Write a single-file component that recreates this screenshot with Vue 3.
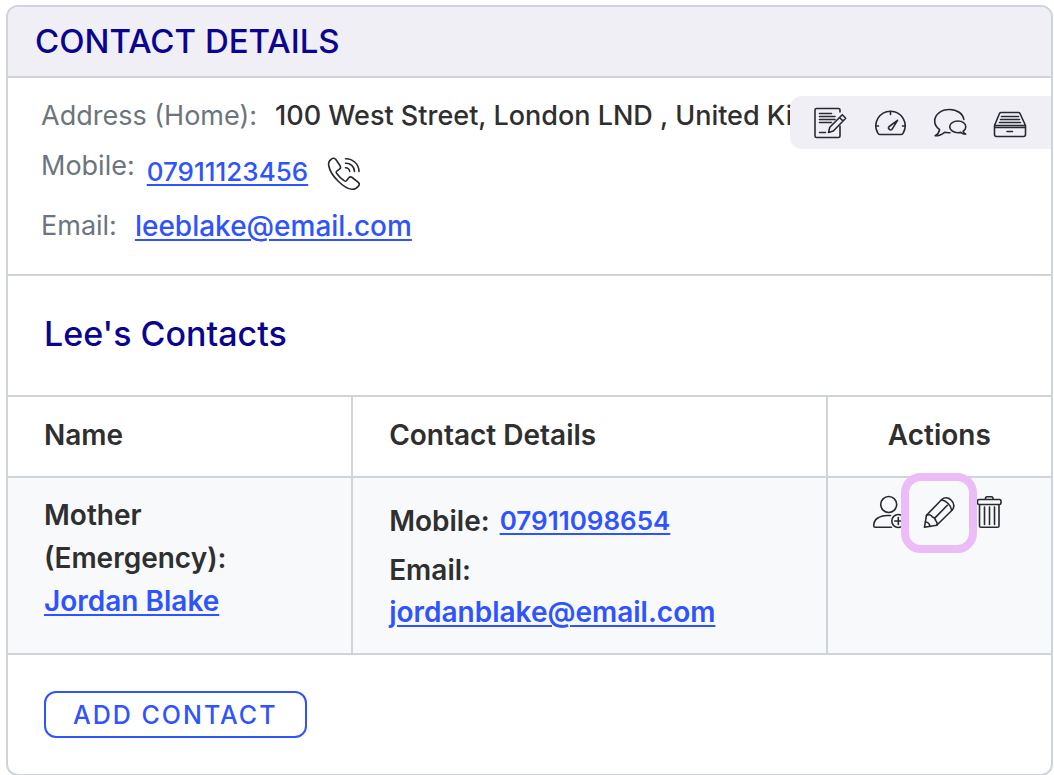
<script setup>
const contact = {
  relation: 'Mother (Emergency):',
  name: 'Jordan Blake',
  mobile: '07911098654',
  email: 'jordanblake@email.com',
}
</script>

<template>
  <main class="card">
    <header class="card-head">
      <h1>CONTACT DETAILS</h1>
    </header>

    <section class="info">
      <div class="row address">
        <span class="label">Address (Home):</span>
        <span class="value">100 West Street, London LND , United Kingdom</span>
      </div>
      <div class="row mobile">
        <span class="label">Mobile:</span>
        <a class="drop number" href="#">07911123456</a>
        <button class="icon-btn call" aria-label="Call mobile">
          <svg viewBox="0 0 32 32">
            <path d="M7.700 1.300C6.400 0 4.300 .300 3 1.500 1 3 .300 5 .700 7.500 1.500 12 5 18 10 23 15 28 20 31 24 31.300 26.500 31.400 29 30 30.600 28 31.500 26.800 31.400 25.300 30.300 24.300L24.200 19.500C23 18.700 21.500 18.800 20.600 19.900L18.500 22.700C18 23.300 17.200 23.300 16.500 22.900 13 20.600 10.500 18.200 8.400 15 8 14.300 8.200 13.600 8.800 13.200L11.500 11.200C12.700 10.300 12.800 9 12.100 7.800Z" />
            <path d="M17.500 .700A13 13 0 0 1 31 13.500M17.500 5.200A8.500 8.500 0 0 1 26.500 13.500M17.500 9.700A4 4 0 0 1 21.700 13.500" />
          </svg>
        </button>
      </div>
      <div class="row">
        <span class="label">Email:</span>
        <a class="email" href="#">leeblake@email.com</a>
      </div>

      <nav class="toolbar" aria-label="Client tools">
        <button class="icon-btn" aria-label="Notes">
          <svg viewBox="0 0 32 32">
            <path d="M26 5V3Q26 1.500 24.500 1.500H2.500Q1 1.500 1 3V29Q1 30.500 2.500 30.500H24.500Q26 30.500 26 29V19" />
            <path d="M5.500 6.500H17.500M5.500 9.500H21M5.500 12.500H21M5.500 15.500H17.500M5.500 25.500H11.500" />
            <path d="M14.500 25.500L15.800 20.300 28.300 7.700 31.700 11.200 19.300 24Z M25.500 10.500L29 14" />
          </svg>
        </button>
        <button class="icon-btn" aria-label="Dashboard">
          <svg viewBox="0 0 32 32">
            <path d="M5.500 27.500Q4.500 27.500 3.800 26A14.600 14.600 0 1 1 29.200 26Q28.500 27.500 27.500 27.500Z" />
            <path d="M16.500 4.500V7.500M2 19H4.500M28.500 19H31M23.500 13.300L15.200 19.500A1.900 1.900 0 1 0 18 22.300Z" />
          </svg>
        </button>
        <button class="icon-btn" aria-label="Messages">
          <svg viewBox="0 0 32 32">
            <path d="M29.800 12.500C29 6.500 23 2.500 15.500 2.500 7 2.500 .700 7.500 .700 14 .700 17.600 2.500 20.500 5.600 22.700 5.200 25.300 3.600 27.300 1.200 28.800 5 28.700 8.200 27.300 10.500 25.300 12.200 25.700 14 25.800 16 25.700" />
            <path d="M29.200 24.200C31 23 31.800 21.300 31.800 19.700 31.800 16.300 28.300 14 24 14S15.700 16.400 15.700 19.800 19.500 25.700 24 25.700C25 25.700 25.800 25.600 26.700 25.400 28.200 26.700 30 27.200 31.700 27.200 30.400 26.500 29.500 25.500 29.200 24.200Z" />
          </svg>
        </button>
        <button class="icon-btn" aria-label="Documents">
          <svg viewBox="0 0 32 32">
            <path d="M.500 18.500L5.500 6.500Q6 5.500 7 5.500H24.500Q25.500 5.500 26 6.500L31.500 18.500V27.500Q31.500 29.500 29.500 29.500H2.500Q.500 29.500 .500 27.500ZM.500 18.500H31.500M.500 20.500H31.500" />
            <path d="M7.500 9.500H24.500M6.500 12.500H25.500M5.500 15.500H26.500M13 24.500H18.500" />
          </svg>
        </button>
      </nav>
    </section>

    <section class="contacts">
      <h2>Lee's Contacts</h2>
      <table>
        <thead>
          <tr>
            <th class="col-name">Name</th>
            <th class="col-details">Contact Details</th>
            <th class="col-actions">Actions</th>
          </tr>
        </thead>
        <tbody>
          <tr>
            <td>
              <div class="person">
                {{ contact.relation }}
                <a href="#">{{ contact.name }}</a>
              </div>
            </td>
            <td class="details">
              <div class="phone-line">
                <span>Mobile:</span>
                <a class="number" href="#">{{ contact.mobile }}</a>
              </div>
              <div>Email:</div>
              <a href="#">{{ contact.email }}</a>
            </td>
            <td class="actions-cell">
              <div class="actions">
                <button class="icon-btn" aria-label="Add person">
                  <svg viewBox="0 0 32 32">
                    <circle cx="15.700" cy="8.500" r="8" />
                    <path d="M18.500 31.200H2.200Q.700 31.200 .700 29.500C.700 23.500 6 19.500 14.500 19.500H17.500" />
                    <circle cx="25.300" cy="25" r="6.500" />
                    <path d="M25.300 21.500V28.500M21.800 25H28.800" />
                  </svg>
                </button>
                <button class="icon-btn highlighted" aria-label="Edit contact">
                  <svg viewBox="0 0 32 32">
                    <path d="M1.500 31.200L3.500 19.200 19 3.300C21.500 .900 25.500 1.200 28.300 4.200 31.500 7.300 31.600 11.500 29 14.200L13.700 29.300Z" />
                    <path d="M3.500 19.200C5.500 18.200 8.800 19.200 9.300 21 11.500 21.500 12.500 22.800 12.600 24.500 14 25.800 14.500 27.500 13.700 29.300M11.500 22.400L24.300 9.300M2.500 26C4.800 26.200 6.600 28 7 30.400M18.500 4C23 4.300 28.300 9.500 28.600 14.300" />
                  </svg>
                </button>
                <button class="icon-btn" aria-label="Delete contact">
                  <svg viewBox="0 0 32 32">
                    <path d="M12.500 3.500V2.500Q12.500 .700 14 .700H18.500Q20 .700 20 2.500V3.500M6 3.500H26.500Q28 3.500 28 5V6.500Q28 8.500 26.500 8.500H6Q4.500 8.500 4.500 6.500V5Q4.500 3.500 6 3.500ZM6.500 8.500V30Q6.500 31.300 8 31.300H24.500Q26 31.300 26 30V8.500M11.500 11V28.500M16.500 11V28.500M21.500 11V28.500" />
                  </svg>
                </button>
              </div>
            </td>
          </tr>
        </tbody>
      </table>
      <footer>
        <button class="add">ADD CONTACT</button>
      </footer>
    </section>
  </main>
</template>

<style>
body {
  background: #fff;
}
</style>

<style scoped>
.card {
  margin: 5px 1px 0 6px;
  border: 2px solid #ced4da;
  border-radius: 12px;
  overflow: hidden;
  font-family: Inter, "Liberation Sans", sans-serif;
  font-size: 27px;
  line-height: 42px;
  color: #2f2f2f;
}
.card-head {
  padding: 13px 27px 14px;
  background: #f0eff5;
  border-bottom: 2px solid #ced4da;
}
h1,
h2 {
  margin: 0;
  font-weight: 500;
  color: #0a0590;
}
h1 {
  font-size: 33px;
}
h2 {
  padding: 37px 36px 40px;
  font-size: 34px;
}
a {
  color: #2f54ff;
  font-weight: 500;
  text-decoration-thickness: 2px;
  text-underline-offset: 3px;
}
.info {
  position: relative;
  padding: 17px 33px 27px;
  border-bottom: 2px solid #ced4da;
}
.row {
  display: flex;
  align-items: flex-start;
  gap: 18px;
  white-space: nowrap;
}
.label {
  color: #6c757d;
}
.value {
  font-weight: 500;
}
.mobile {
  gap: 12px;
  padding: 8px 0 12px;
}
.drop {
  margin-top: 6px;
}
.number {
  font-size: 26px;
}
.email {
  font-size: 28px;
}
.icon-btn {
  display: flex;
  flex: none;
  align-items: center;
  justify-content: center;
  padding: 0;
  border: 0;
  background: none;
  cursor: pointer;
}
.icon-btn svg {
  display: block;
  width: 32px;
  height: 32px;
  overflow: visible;
  fill: none;
  stroke: #272a30;
  stroke-width: 1.6;
  stroke-linecap: round;
  stroke-linejoin: round;
}
.call {
  margin: 13px 0 0 8px;
}
.toolbar {
  position: absolute;
  top: 18px;
  right: 0;
  display: flex;
  padding: 1px 11px 0 10px;
  border-radius: 12px 0 0 12px;
  background: #f0eff5;
}
.toolbar .icon-btn {
  width: 60px;
  height: 52px;
}
table {
  width: 100%;
  table-layout: fixed;
  border-collapse: separate;
  border-spacing: 0;
  font-size: 28px;
}
th,
td {
  box-sizing: border-box;
  padding: 0 36px;
  border-top: 2px solid #ced4da;
  font-weight: 600;
  text-align: left;
  vertical-align: top;
}
th {
  height: 81px;
  padding-bottom: 4px;
  vertical-align: middle;
}
th + th,
td + td {
  border-left: 2px solid #ced4da;
}
.col-name {
  width: 32.9%;
}
.col-details {
  width: 45.5%;
}
th.col-actions {
  padding-left: 0;
  padding-right: 0;
  text-align: center;
}
td {
  padding-top: 16px;
  padding-bottom: 30px;
  border-bottom: 2px solid #ced4da;
  background: #f8f9fb;
}
td a {
  font-weight: 600;
}
.person {
  max-width: 190px;
  line-height: 43px;
}
.details {
  padding-top: 22px;
  padding-bottom: 20px;
}
.phone-line {
  display: flex;
  gap: 10px;
  margin-bottom: 7px;
}
td.actions-cell {
  padding: 9px 0 0;
}
.actions {
  display: flex;
  justify-content: center;
}
.actions .icon-btn {
  width: 50px;
  height: 50px;
}
.highlighted {
  position: relative;
  z-index: 1;
}
.highlighted::after {
  content: "";
  position: absolute;
  inset: -14px -13px -16px;
  border: 8px solid #ebbcf8;
  border-radius: 20px;
}
footer {
  padding: 36px;
}
.add {
  padding: 0 27px;
  height: 47px;
  border: 2px solid #2f54ff;
  border-radius: 12px;
  background: #fff;
  color: #2f54ff;
  font: 500 25px Inter, "Liberation Sans", sans-serif;
  letter-spacing: 2px;
  cursor: pointer;
}
</style>
